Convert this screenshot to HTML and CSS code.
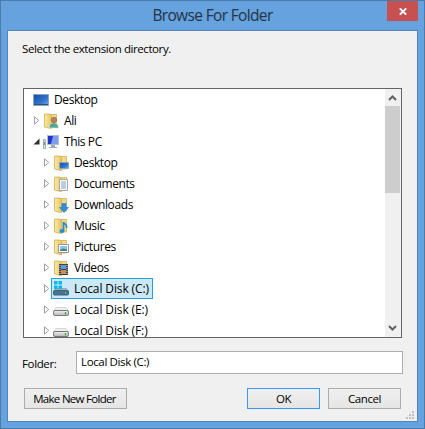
FILE: index.html
```html
<!DOCTYPE html>
<html lang="en">
<head>
<meta charset="utf-8">
<title>Browse For Folder</title>
<link rel="stylesheet" href="styles.css">
</head>
<body>
<svg class="defs" width="0" height="0" aria-hidden="true">
  <defs>
    <linearGradient id="blue" x1="0" y1="0" x2="1" y2="1"><stop offset="0" stop-color="#164a9c"/><stop offset=".6" stop-color="#3275cf"/><stop offset="1" stop-color="#6db2ee"/></linearGradient>
    <linearGradient id="gold" x1="0" y1="0" x2="1" y2="0"><stop offset="0" stop-color="#fbeaa8"/><stop offset="1" stop-color="#e6c465"/></linearGradient>
    <linearGradient id="metal" x1="0" y1="0" x2="0" y2="1"><stop offset="0" stop-color="#f2f2f2"/><stop offset="1" stop-color="#b4b6b8"/></linearGradient>
    <symbol id="closed" viewBox="0 0 7 9"><path d="M1.500 .8v7.400L5.800 4.500z" fill="#fff" stroke="#a0a0a0"/></symbol>
    <symbol id="open" viewBox="0 0 7 9"><path d="M6.500 1.500v6H.5z" fill="#303030"/></symbol>
    <symbol id="folder" viewBox="0 0 16 16"><path d="M6 1.500h7.500v12.500H6z" fill="#f0d88c" stroke="#d5b052" stroke-width=".8"/><path d="M1.500 1h5l2 1.500v13.200l-7-1.700z" fill="url(#gold)" stroke="#d3ae4e" stroke-width=".8"/></symbol>
    <symbol id="drive" viewBox="0 0 16 16"><path d="M3 5.500h10l2.500 3.500H.5z" fill="#eee" stroke="#c2c2c2" stroke-width=".6"/><rect x=".5" y="8.500" width="15" height="5" rx="1.600" fill="url(#metal)" stroke="#777"/><path d="M12.500 10.200v2" stroke="#27ae38" stroke-width="1.500"/></symbol>
  </defs>
</svg>
<main class="window">
  <header class="titlebar"><h1>Browse For Folder</h1>
    <button class="close" aria-label="Close"><svg width="8" height="7" viewBox="0 0 8 7"><path d="M.8 .3l6.400 6.400M7.200 .3L.8 6.700" stroke="#fff" stroke-width="1.800"/></svg></button>
  </header>
  <section class="client">
    <p class="prompt">Select the extension directory.</p>
    <div class="tree">
      <ul class="rows">
        <li class="root"><svg class="icon" viewBox="0 0 16 16"><path d="M.5 2.500h15v11H.5z" fill="url(#blue)" stroke="#8ea4b8"/><path d="M1 12.500h14" stroke="#33536f"/></svg><span>Desktop</span></li>
        <li class="l1"><svg class="arrow"><use href="#closed"/></svg><svg class="icon" viewBox="0 0 16 16"><use href="#folder"/><path d="M6 15c0-7 9.500-7 9.500 0z" fill="#56a58c" stroke="#e4efe9" stroke-width=".6"/><circle cx="11" cy="7" r="2.700" fill="#b98257" stroke="#6e5a48" stroke-width=".5"/></svg><span>Ali</span></li>
        <li class="l1"><svg class="arrow"><use href="#open"/></svg><svg class="icon" viewBox="0 0 16 16"><path d="M4.500 1.500h11v9h-11z" fill="#2038c8" stroke="#b5bccb"/><path d="M10 2h5v8H8z" fill="#7f9cf0"/><path d="M8 11h4v2h2v1H6v-1h2z" fill="#9ba9b5"/><path d="M.5 5.500h2v9h-2z" fill="#ddd" stroke="#aaa"/><path d="M1 8h1v3H1z" fill="#40bd45"/></svg><span>This PC</span></li>
        <li class="l2"><svg class="arrow"><use href="#closed"/></svg><svg class="icon" viewBox="0 0 16 16"><use href="#folder"/><path d="M6.500 7.500h9v6h-9z" fill="url(#blue)" stroke="#8aa6bd"/></svg><span>Desktop</span></li>
        <li class="l2"><svg class="arrow"><use href="#closed"/></svg><svg class="icon" viewBox="0 0 16 16"><use href="#folder"/><path d="M6.500 3.500h8v11h-8z" fill="#fff" stroke="#a0a8ae"/><path d="M8 6h5M8 8h5M8 10h5M8 12h5" stroke="#7c9bc0"/></svg><span>Documents</span></li>
        <li class="l2"><svg class="arrow"><use href="#closed"/></svg><svg class="icon" viewBox="0 0 16 16"><use href="#folder"/><path d="M9 6.500h4v4h2.500L11 15.500l-4.500-5H9z" fill="#2d91dc" stroke="#2676ba" stroke-width=".6"/></svg><span>Downloads</span></li>
        <li class="l2"><svg class="arrow"><use href="#closed"/></svg><svg class="icon" viewBox="0 0 16 16"><use href="#folder"/><path d="M10.500 13V4c1 3 4 2.500 3 6" fill="none" stroke="#258bd5" stroke-width="1.700"/><ellipse cx="9" cy="13" rx="2.500" ry="2" fill="#258bd5"/></svg><span>Music</span></li>
        <li class="l2"><svg class="arrow"><use href="#closed"/></svg><svg class="icon" viewBox="0 0 16 16"><use href="#folder"/><path d="M5.500 5.500h10v8h-10z" fill="#fff" stroke="#999"/><path d="M7 7h7v5H7z" fill="#8cc5ec"/><path d="M7 11l3-1.500 4 1V12H7z" fill="#4a8273"/></svg><span>Pictures</span></li>
        <li class="l2"><svg class="arrow"><use href="#closed"/></svg><svg class="icon" viewBox="0 0 16 16"><use href="#folder"/><path d="M6 4h9v11H6z" fill="#3b4146"/><path d="M8 5h5v4H8z" fill="#5a9cd7"/><path d="M8 10h5v4H8z" fill="#cc8e51"/><path d="M7 5v10M14 5v10" stroke="#ddd" stroke-dasharray="1"/></svg><span>Videos</span></li>
        <li class="l2 disk"><svg class="arrow"><use href="#closed"/></svg><div class="selected"><svg class="icon" viewBox="0 0 16 16"><path d="M2.500 7h11L16 10.500H0z" fill="#a3aeb4"/><rect x=".5" y="9.500" width="15" height="4.500" rx="1" fill="#427495" stroke="#476273"/><path d="M1 0h3.500v3.500H1zM5.500 0H9v3.500H5.500zM1 4.500h3.500V8H1zM5.500 4.500H9V8H5.500z" fill="#05b8ed"/><path d="M12.500 11v1.500" stroke="#47df66"/></svg><span>Local Disk (C:)</span></div></li>
        <li class="l2 disk"><svg class="arrow"><use href="#closed"/></svg><svg class="icon"><use href="#drive"/></svg><span>Local Disk (E:)</span></li>
        <li class="l2 disk"><svg class="arrow"><use href="#closed"/></svg><svg class="icon"><use href="#drive"/></svg><span>Local Disk (F:)</span></li>
      </ul>
      <div class="scrollbar"><svg width="15" height="17"><path d="M4 11l3.500-3.500L11 11" fill="none" stroke="#606060" stroke-width="2"/></svg><div class="thumb"></div><svg width="15" height="17"><path d="M4 6l3.500 3.500L11 6" fill="none" stroke="#606060" stroke-width="2"/></svg></div>
    </div>
    <div class="field"><label for="folder-name">Folder:</label><input id="folder-name" value="Local Disk (C:)"></div>
    <footer class="actions"><button class="btn make">Make New Folder</button><button class="btn ok">OK</button><button class="btn cancel">Cancel</button></footer>
    <svg class="grip" width="8" height="8"><path d="M6 0h2v2H6zM3 3h2v2H3zM6 3h2v2H6zM0 6h2v2H0zM3 6h2v2H3zM6 6h2v2H6z" fill="#bfbfbf"/></svg>
  </section>
</main>
</body>
</html>
```
FILE: styles.css
```css
* { box-sizing: border-box; }
body { margin: 0; font: 12px/16px "Open Sans", "Noto Sans", sans-serif; color: #000; letter-spacing: -.4px; }
.defs { position: absolute; }
.window { width: 425px; height: 429px; padding: 0 6px 6px; border: 1px solid #4a7ba9; background: #65a2de; display: flex; flex-direction: column; }
.titlebar { flex: 0 0 29px; position: relative; }
h1 { margin: 0; font-size: 15.500px; font-weight: 400; line-height: 29px; text-align: center; color: #243444; letter-spacing: -.65px; }
.close { position: absolute; right: 0; top: 0; width: 31px; height: 20px; padding: 0; border: 0; background: #c75050; display: grid; place-items: center; }
.client { position: relative; flex: 1; border: 1px solid #4f86bd; background: #f0f0f0; padding: 10px 15px 0; }
.prompt { margin: 0 0 31px -1px; font-size: 11.500px; letter-spacing: -.42px; }
.tree { height: 250px; width: 379px; border: 1px solid #646464; background: #fff; display: flex; overflow: hidden; }
.rows { flex: 1; margin: 0; padding: 0; list-style: none; }
.rows li { height: 21px; display: flex; align-items: center; white-space: nowrap; }
.rows .disk { letter-spacing: -.12px; }
.root, .l1 { padding-left: 9px; }
.l2 { padding-left: 19px; }
.arrow { width: 7px; height: 9px; margin-right: 3px; flex: none; }
.icon { width: 16px; height: 16px; margin-right: 5px; flex: none; }
.selected { height: 21px; width: 102px; margin-left: -2px; padding-left: 1px; border: 1px solid #26a0da; background: #cbe8f6; display: flex; align-items: center; }
.scrollbar { width: 16px; background: #f0f0f0; display: grid; grid-template-rows: 17px 1fr 17px; }
.thumb { width: 15px; height: 87px; background: #cdcdcd; }
.field { display: flex; align-items: center; margin: 13px 0 0 -1px; height: 23px; font-size: 11.500px; letter-spacing: -.36px; }
label { width: 54px; flex: none; padding-top: 2px; }
input { width: 327px; height: 23px; flex: none; border: 1px solid #abadb3; padding: 0 4px 3px; font: inherit; letter-spacing: inherit; background: #fff; color: #000; }
.actions { display: flex; margin: 14px 0 0 1px; }
.btn { height: 21px; padding: 0; border: 1px solid #acacac; background: linear-gradient(#f0f0f0, #e5e5e5); font: inherit; font-size: 11.500px; letter-spacing: -.4px; color: #000; }
.make { width: 103px; padding-right: 2px; letter-spacing: -.7px; }
.ok { width: 73px; margin-left: 120px; border-color: #3399ff; }
.cancel { width: 73px; margin-left: 8px; }
.grip { position: absolute; right: 3px; bottom: 2px; }
```
